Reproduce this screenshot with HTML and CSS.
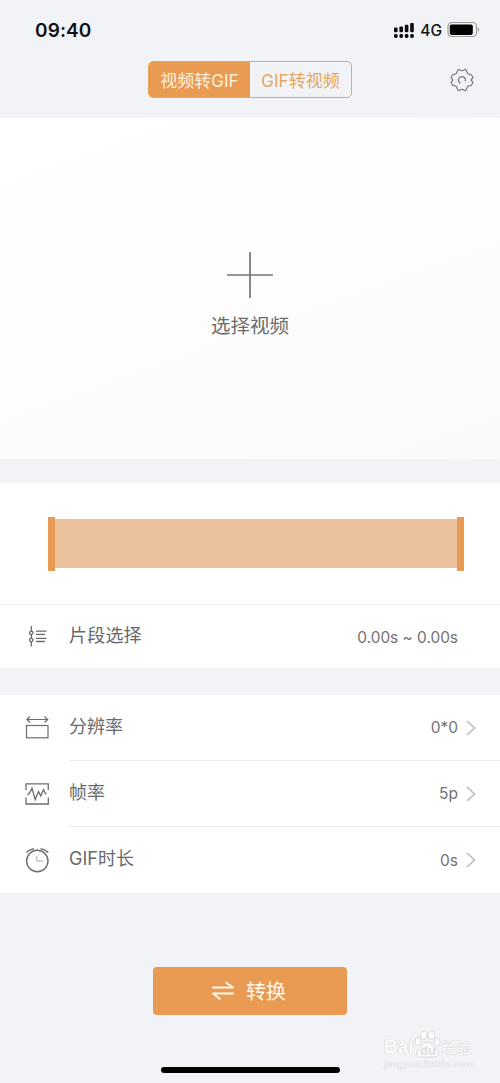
FILE: index.html
```html
<!DOCTYPE html>
<html lang="zh-CN">
<head>
<meta charset="utf-8">
<title>视频转GIF</title>
<link rel="stylesheet" href="styles.css">
</head>
<body>
<div class="screen">
  <header class="status">
    <span class="time">09:40</span>
    <div class="indicators">
      <svg class="signal" width="22" height="17" viewBox="0 0 22 17" fill="#0c0c0e">
        <rect x="1" y="5.5" width="3.6" height="4.8" rx="1"/><rect x="6.4" y="4.5" width="3.6" height="5.8" rx="1"/><rect x="11.8" y="2.7" width="3.6" height="7.6" rx="1"/><rect x="17.2" y="1" width="3.6" height="9.3" rx="1"/>
        <rect x="1" y="12" width="3.6" height="4" rx="1.4"/><rect x="6.4" y="12" width="3.6" height="4" rx="1.4"/><rect x="11.8" y="12" width="3.6" height="4" rx="1.4"/><rect x="17.2" y="12" width="3.6" height="4" rx="1.4"/>
      </svg>
      <span class="network">4G</span>
      <svg class="battery" width="34" height="18" viewBox="0 0 34 18">
        <rect x="1" y="1.5" width="28.5" height="14" rx="4" fill="none" stroke="#9b9ca0" stroke-width="1.2"/>
        <rect x="2.8" y="3.5" width="23" height="10.4" rx="1.8" fill="#000"/>
        <path d="M31 6.2Q33 8.7 31 11z" fill="#85868a"/>
      </svg>
    </div>
  </header>
  <nav class="toolbar">
    <div class="tabs"><span class="tab active">视频转GIF</span><span class="tab">GIF转视频</span></div>
    <svg class="settings" width="26" height="26" viewBox="0 0 26 26" fill="none" stroke="#77787b" stroke-width="1.2" stroke-linecap="round">
      <path d="M8.8 3.2Q9.8 1.9 11 2.9Q13 4.3 15 2.9Q16.200 1.900 17.2 3.200L18.400 5.900Q19 7.300 20.900 7.300Q22.300 7.400 22.900 8.600L23.800 10.300Q24.100 11 23.100 11.700Q21.200 13 23.100 14.300Q24.100 15 23.800 15.700L22.900 17.400Q22.300 18.600 20.900 18.700Q19 18.700 18.400 20.100L17.200 22.800Q16.200 24.100 15 23.100Q13 21.700 11 23.100Q9.800 24.100 8.800 22.800L7.600 20.100Q7 18.700 5.100 18.700Q3.700 18.600 3.100 17.400L2.200 15.700Q1.900 15 2.900 14.300Q4.800 13 2.900 11.700Q1.900 11 2.200 10.300L3.100 8.600Q3.700 7.400 5.100 7.300Q7 7.300 7.600 5.900Z"/>
      <path d="M11.200 16A3.400 3.400 0 1 1 16.200 14"/>
    </svg>
  </nav>
  <section class="picker">
    <svg width="48" height="48" viewBox="0 0 48 48" stroke="#747474" stroke-width="1.7"><path d="M24 1V47M1 24H47"/></svg>
    <span class="picker-label">选择视频</span>
  </section>
  <section class="clip">
    <div class="timeline"><i class="handle"></i><i class="range"></i><i class="handle"></i></div>
    <div class="row clip-row">
      <svg class="icon" width="26" height="26" viewBox="0 0 26 26" fill="none" stroke="#6c6c6c" stroke-width="1.3" stroke-linecap="round">
        <path d="M7.300 2.500V7M7.300 11V14M7.300 18V22M12.500 7.200H22M12.500 10.400H20.500M12.500 14.300H22M12.500 17.500H20.500"/><circle cx="7.300" cy="8.800" r="1.700"/><circle cx="7.300" cy="16" r="1.700"/>
      </svg>
      <span class="label">片段选择</span><span class="value">0.00s ~ 0.00s</span>
    </div>
  </section>
  <section class="options">
    <div class="row">
      <svg class="icon" width="26" height="26" viewBox="0 0 26 26" fill="none" stroke="#6c6c6c" stroke-width="1.200">
        <rect x="2.500" y="10.500" width="21.500" height="12.300"/><path d="M3 4.500H23M6 1.500L2.800 4.500L6 7.500M20.500 1.500L23.700 4.500L20.500 7.500"/>
      </svg>
      <div class="option"><span class="label">分辨率</span><span class="value">0*0</span>
        <svg class="chevron" width="12" height="16" viewBox="0 0 12 16"><path d="M2 1L9.500 8L2 15"/></svg></div>
    </div>
    <div class="row">
      <svg class="icon" width="26" height="26" viewBox="0 0 26 26" fill="none" stroke="#6c6c6c" stroke-width="1.300">
        <path d="M2 9V2.800H24.300V9M2 16.500V23H24.300V16.500M3.500 14L5.500 12L8 7.200L11.200 18.500L14.500 10.500L16.800 15L19.500 8.500L21.500 12.500H22.500"/>
      </svg>
      <div class="option"><span class="label">帧率</span><span class="value">5p</span>
        <svg class="chevron" width="12" height="16" viewBox="0 0 12 16"><path d="M2 1L9.500 8L2 15"/></svg></div>
    </div>
    <div class="row">
      <svg class="icon" width="26" height="26" viewBox="0 0 26 26" fill="none" stroke="#6c6c6c" stroke-width="1.400">
        <circle cx="13.300" cy="14" r="10.700"/><path d="M2.300 5.500Q5 2.700 10 1.600M16.500 1.600Q21.500 2.700 24.300 5.500"/><path d="M12.800 9V14.200H19.500M12.500 2H14" stroke="#aaa" stroke-width="1"/>
      </svg>
      <div class="option"><span class="label">GIF时长</span><span class="value">0s</span>
        <svg class="chevron" width="12" height="16" viewBox="0 0 12 16"><path d="M2 1L9.500 8L2 15"/></svg></div>
    </div>
  </section>
  <footer class="footer">
    <div class="convert">
      <svg width="24" height="20" viewBox="0 0 24 20" fill="none" stroke="#fff8ec" stroke-width="1.800" stroke-linecap="round" stroke-linejoin="round"><path d="M2 6.500H22L15 1.500M22 12.500H2L9 18"/></svg>
      <span>转换</span>
    </div>
    <div class="home"></div>
    <div class="watermark">
      <div class="brand"><span>Bai</span>
        <svg width="27" height="28" viewBox="0 0 27 28" fill="#fcfcfd" stroke="#d9dade" stroke-width="1">
          <ellipse cx="4" cy="11.500" rx="3" ry="4"/><ellipse cx="10" cy="5.200" rx="3.100" ry="4.200"/><ellipse cx="17.500" cy="5.200" rx="3.100" ry="4.200"/><ellipse cx="23.200" cy="12" rx="3" ry="4"/>
          <path d="M13.500 12C9 12 8 17 4.500 19.500C0 24 4 28 9 27H18C24 28 27 23 22 19C18.500 16.500 18 12 13.500 12Z"/>
          <text class="du" x="6" y="25">du</text>
        </svg>
        <span class="jingyan">经验</span></div>
      <div class="domain">jingyan.baidu.com</div>
    </div>
  </footer>
</div>
</body>
</html>
```
FILE: styles.css
```css
* { box-sizing: border-box; }
body {
  margin: 0;
  font-family: Inter, "Noto Sans CJK SC", sans-serif;
  font-feature-settings: "calt" 0;
  color: #666;
  background: #f2f3f7;
}
.screen { width: 500px; height: 1083px; display: flex; flex-direction: column; overflow: hidden; }
.status { height: 60px; padding: 0 19px 0 35px; display: flex; align-items: center; justify-content: space-between; }
.time { color: #111216; font-size: 19px; font-weight: 600; letter-spacing: .1px; }
.indicators { display: flex; align-items: center; }
.network { margin: 1px 5px 0 5px; color: #111216; font-size: 15.5px; font-weight: 500; }
.toolbar { height: 58px; padding: 1px 25px 0 148px; display: flex; align-items: flex-start; justify-content: space-between; }
.settings { margin-top: 6px; }
.tabs { display: flex; width: 204px; height: 37px; border: 1px solid #e8a55e; border-radius: 5px; overflow: hidden; }
.tab { flex: 1; display: flex; align-items: center; justify-content: center; padding-bottom: 1px; font-size: 17px; color: #e5a660; white-space: nowrap; }
.tab.active { background: #e99b53; color: #fdf0dd; }
.picker { height: 341px; padding-top: 133px; display: flex; flex-direction: column; align-items: center; background: linear-gradient(160deg, #fff 0%, #fdfdfd 50%, #fafafa 100%); }
.picker-label { margin-top: 12px; font-size: 19.5px; line-height: 30px; color: #6c6c6c; }
.clip { margin-top: 24px; height: 185px; background: #fff; }
.timeline { height: 122px; padding: 33.500px 36px 0 48px; display: flex; border-bottom: 1px solid #f1f1f1; }
.handle { width: 7px; height: 54px; background: #e99b53; }
.range { flex: 1; height: 49px; margin-top: 2px; background: #ebc19c; }
.row { display: flex; align-items: center; height: 66px; padding-left: 24px; }
.icon { flex: none; margin-right: 19px; }
.clip-row { height: 63px; padding-right: 42px; }
.label { flex: 1; font-size: 18px; line-height: 26px; color: #696969; }
.value { font-size: 16px; color: #727272; }
.clip-row .label { margin-top: -2px; letter-spacing: .2px; }
.clip-row .value { margin-top: 1px; font-size: 15.4px; }
.options { margin-top: 27px; height: 198px; background: #fff; }
.option { flex: 1; height: 66px; display: flex; align-items: center; padding-right: 23px; border-bottom: 1px solid #ececee; }
.option .label { margin-top: -2px; }
.option .value { font-size: 15.5px; }
.row:last-child .option { border-bottom: 0; }
.chevron { margin-left: 7px; fill: none; stroke: #bdbdbd; stroke-width: 1.7; }
.footer { position: relative; flex: 1; padding-top: 73px; border-top: 1px solid #ebedf1; display: flex; flex-direction: column; align-items: center; }
.convert { width: 194px; height: 48px; padding: 0 3px 1px 0; border-radius: 4px; display: flex; align-items: center; justify-content: center; gap: 11px; background: #e99b53; color: #fff8ec; font-size: 20px; }
.home { width: 179px; height: 6px; margin-top: 52px; border-radius: 3px; background: #000; }
.watermark { position: absolute; left: 384px; top: 134px; width: 96px; color: #fcfcfd; text-shadow: 0 0 1px #bfc1c6, 0 0 1px #d6d8dc; }
.brand { display: flex; align-items: flex-end; height: 30px; font: 700 19px/22px "Liberation Sans", sans-serif; }
.du { font: 700 13px "Liberation Sans", sans-serif; fill: #dcdde1; stroke: none; text-shadow: none; }
.jingyan { margin-left: 1px; font: 500 15px/22px "Noto Sans CJK SC", sans-serif; }
.domain { margin-top: -1px; font: 11px/13px "Liberation Serif", serif; letter-spacing: .5px; }
```
